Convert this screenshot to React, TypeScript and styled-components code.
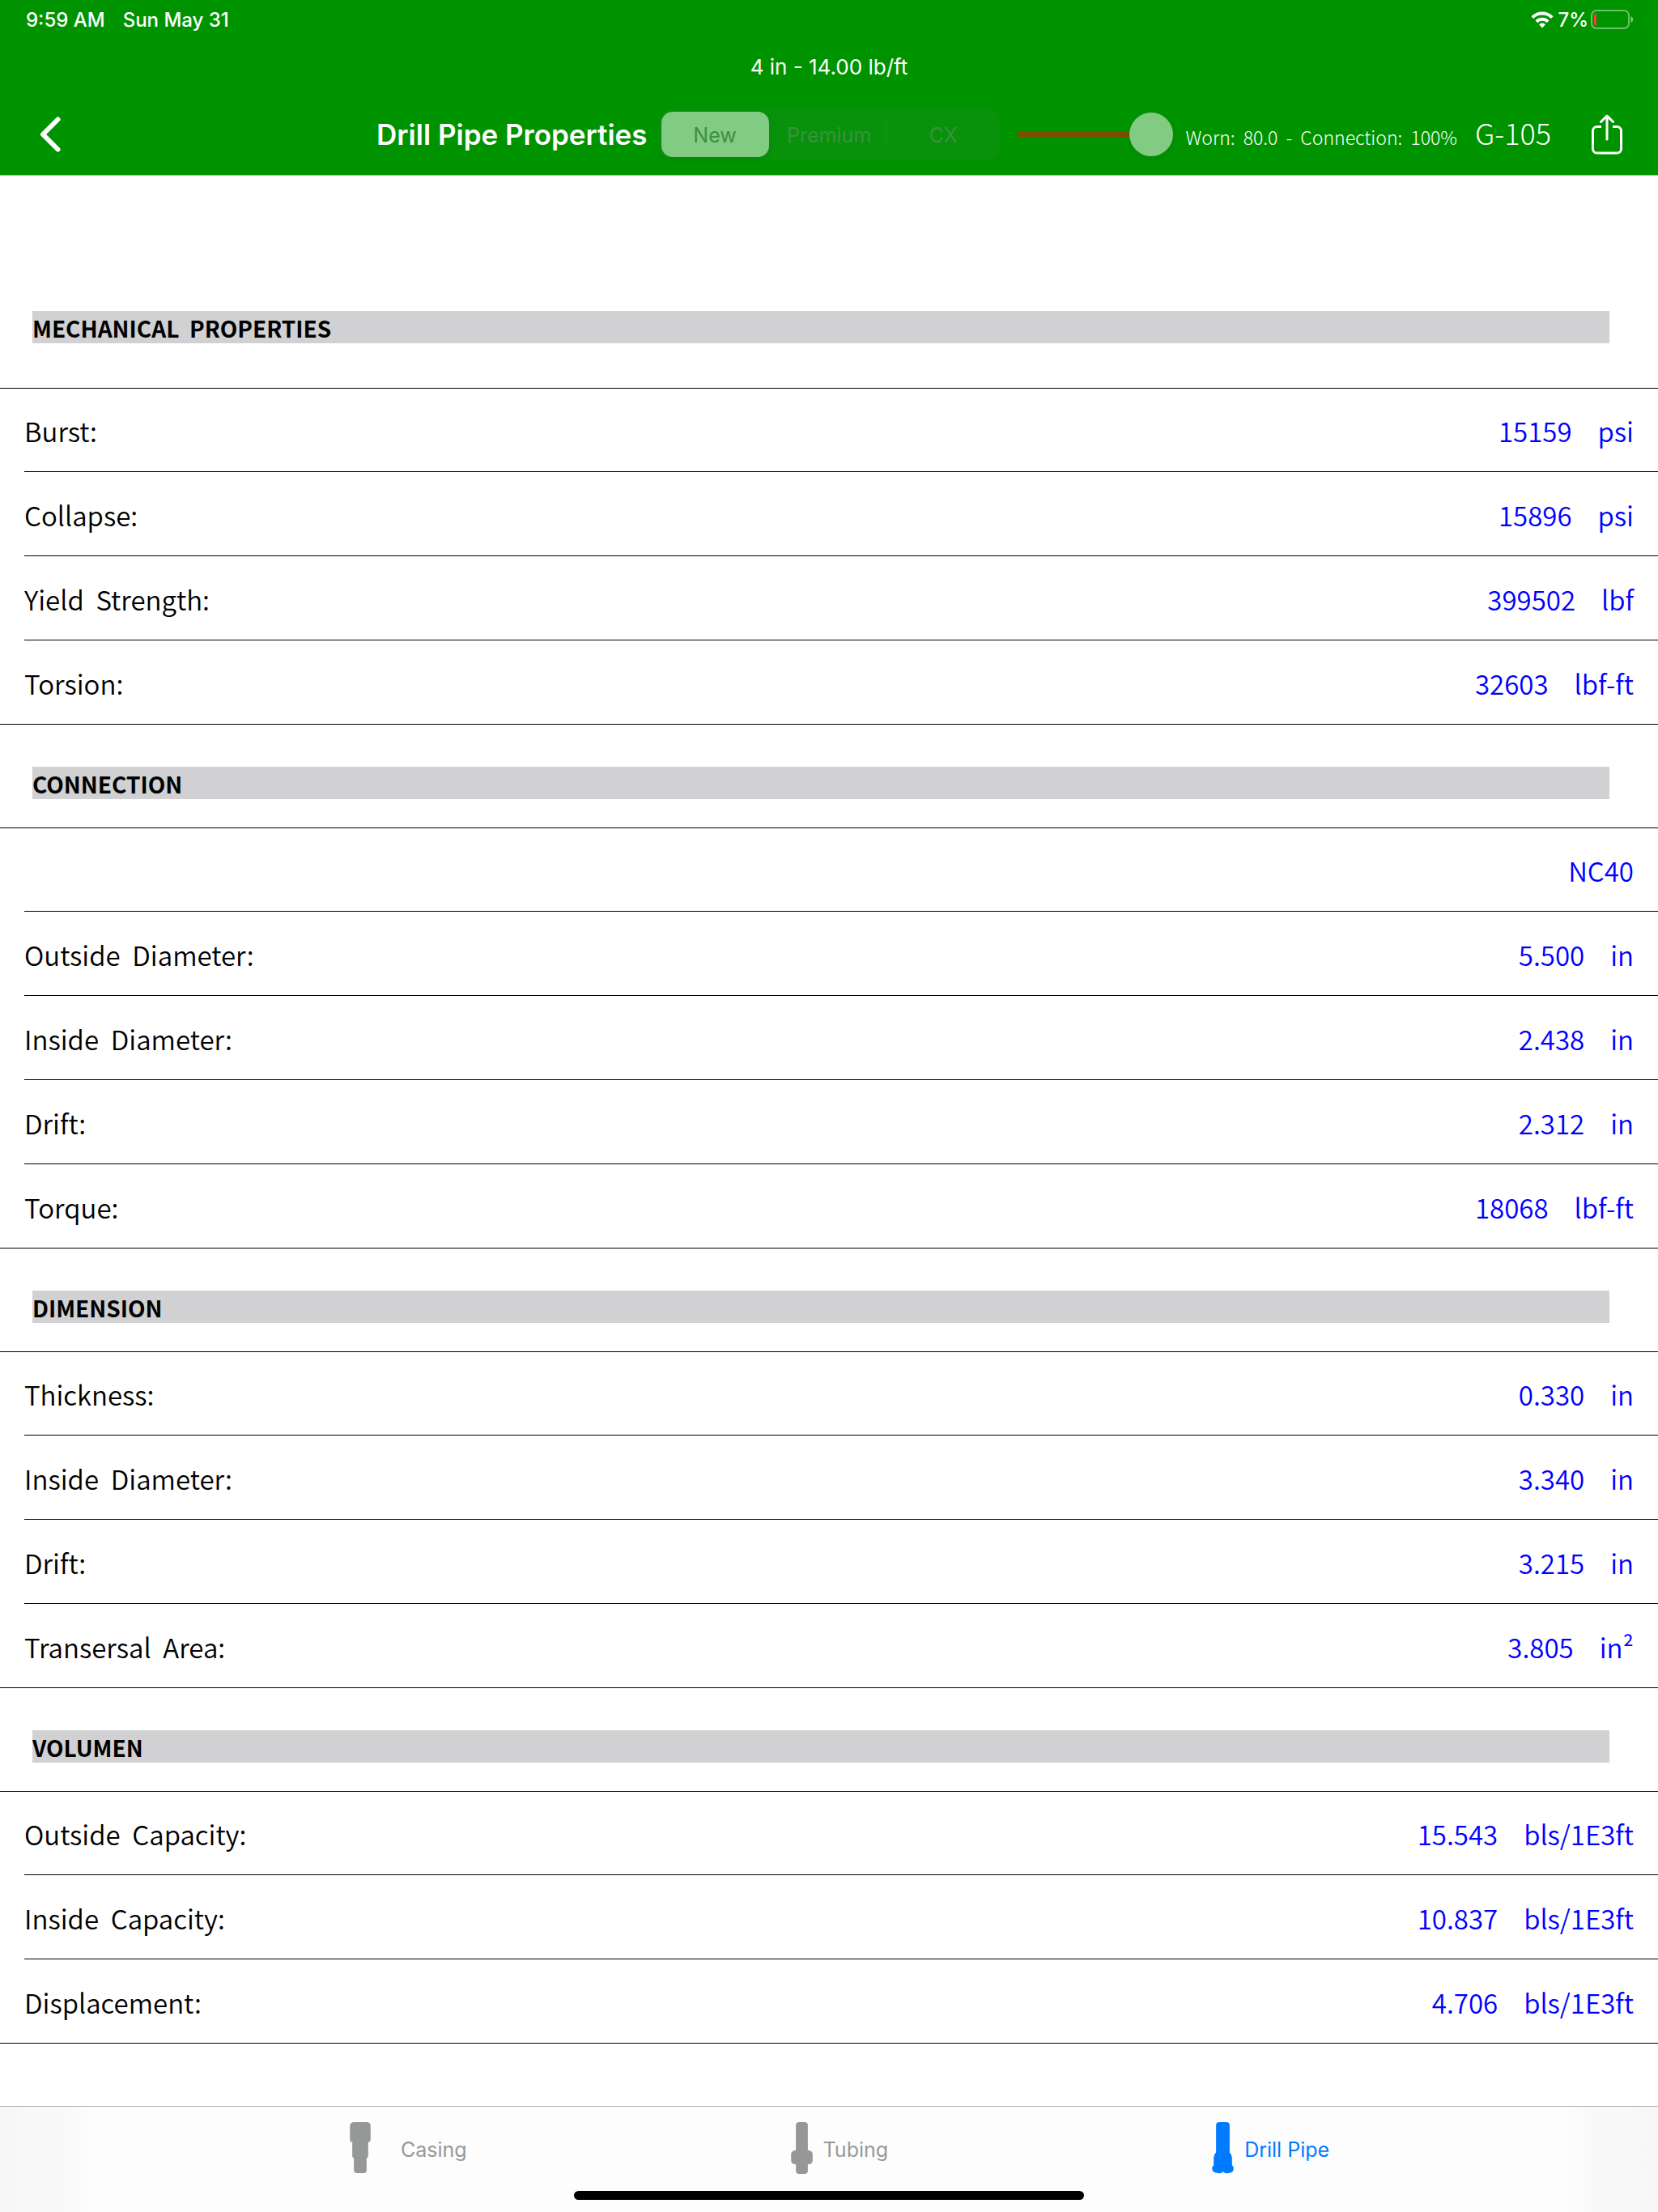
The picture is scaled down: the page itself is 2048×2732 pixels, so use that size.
import React, { useState } from "react";
import styled, { createGlobalStyle } from "styled-components";

const UI_FONT = `Inter, "Liberation Sans", sans-serif`;
const TEXT_FONT = `"Noto Sans CJK SC", "Noto Sans", sans-serif`;

const GlobalStyle = createGlobalStyle`
  *, *::before, *::after { box-sizing: border-box; }
  body { margin: 0; background: #fff; }
  button { font: inherit; color: inherit; background: none; border: 0; padding: 0; cursor: pointer; }
`;

const Page = styled.div`
  display: flex;
  flex-direction: column;
  min-height: 100vh;
  background: #fff;
  color: #000;
  font-family: ${UI_FONT};
`;

const Header = styled.header`
  background: #009300;
  color: #fff;
  border-bottom: 1px solid #b2b2b2;
`;

const StatusBar = styled.div`
  display: flex;
  align-items: center;
  justify-content: space-between;
  height: 48px;
  padding: 0 30px 0 32px;
  font-size: 24px;
  font-weight: 500;
`;

const StatusGroup = styled.div<{ $gap: number }>`
  display: flex;
  align-items: center;
  gap: ${(p) => p.$gap}px;
`;

const Prompt = styled.p`
  display: flex;
  align-items: center;
  justify-content: center;
  height: 68px;
  margin: 0;
  font-size: 26px;
`;

const NavBar = styled.nav`
  display: flex;
  align-items: center;
  justify-content: space-between;
  height: 100px;
  padding: 0 44px 0 48px;
`;

const IconButton = styled.button`
  display: flex;
`;

const NavTools = styled.div`
  display: flex;
  align-items: center;
`;

const Title = styled.h1`
  margin: 0 13px 0 0;
  font-size: 35px;
  font-weight: 600;
  line-height: 40px;
  white-space: nowrap;
`;

const Segmented = styled.fieldset`
  display: grid;
  grid-template-columns: repeat(3, 141px);
  height: 64px;
  margin: 0 21px 0 0;
  padding: 4px 0;
  border: 0;
  border-radius: 18px;
  background: #08920c;
`;

const Segment = styled.label<{ $divided?: boolean }>`
  display: flex;
  align-items: center;
  height: 56px;
  padding: 0 4px;
  color: #3c913e;
  font-size: 25px;
  background: ${(p) =>
    p.$divided ? "linear-gradient(#1a911d, #1a911d) right center / 1px 36px no-repeat" : "none"};

  input {
    position: absolute;
    opacity: 0;
    pointer-events: none;
  }

  span {
    flex: 1;
    padding-top: 2px;
    line-height: 54px;
    text-align: center;
    border-radius: 14px;
  }

  input:checked + span {
    background: #82cb82;
    box-shadow: 0 4px 8px rgba(0, 0, 0, 0.08);
  }
`;

const Slider = styled.input`
  appearance: none;
  width: 192px;
  height: 54px;
  margin: 0 16px 0 0;
  background: linear-gradient(#804a00, #804a00) center / 100% 6px no-repeat;

  &::-webkit-slider-thumb {
    appearance: none;
    width: 54px;
    height: 54px;
    border-radius: 50%;
    background: #82cb82;
    box-shadow: 0 6px 14px rgba(0, 0, 0, 0.06);
  }
`;

const Readout = styled.div`
  display: flex;
  align-items: baseline;
  gap: 22px;
  margin-right: 50px;
  padding-bottom: 7px;
  font-family: ${TEXT_FONT};
  font-weight: 300;
`;

const WornNote = styled.output`
  font-size: 23px;
  line-height: 36px;
  white-space: pre;
`;

const GradeButton = styled.button`
  && {
    font-size: 36px;
    line-height: 48px;
  }
`;

const Content = styled.main`
  flex: 1;
  padding-top: 115px;
  font-family: ${TEXT_FONT};
`;

const SectionTitle = styled.h2<{ $first: boolean }>`
  margin: 52px 60px ${(p) => (p.$first ? 55 : 35)}px 40px;
  height: 40px;
  background: #d1d1d3;
  font-size: 28px;
  font-weight: 700;
  line-height: 42px;
  white-space: pre;
`;

const List = styled.dl`
  margin: 0;
  border-top: 1px solid #000;
`;

const Row = styled.div`
  display: flex;
  align-items: center;
  justify-content: space-between;
  height: 104px;
  margin-left: 30px;
  padding: 2px 30px 0 0;
  border-bottom: 1px solid #000;
  font-size: 33px;
  font-weight: 350;
  white-space: pre;

  &:first-child {
    height: 103px;
  }

  &:last-child {
    margin-left: 0;
    padding-left: 30px;
  }
`;

const Label = styled.dt`
  line-height: 50px;
`;

const Value = styled.dd`
  display: flex;
  gap: 32px;
  margin: 0 0 0 auto;
  color: #0000ff;
  line-height: 50px;
`;

const Footer = styled.footer`
  height: 131px;
  border-top: 1px solid #b2b2b2;
  background: linear-gradient(90deg, #f7f7f7 0, #f9f9f9 80px, #fdfdfd 116px, #fdfdfd calc(100% - 116px), #f9f9f9 calc(100% - 80px), #f7f7f7 100%);
`;

const Tabs = styled.nav`
  display: flex;
  justify-content: center;
  gap: 400px;
  height: 102px;
`;

const Tab = styled.button<{ $active: boolean }>`
  && {
    display: flex;
    align-items: center;
    gap: 13px;
    color: ${(p) => (p.$active ? "#007aff" : "#969898")};
    font-family: ${UI_FONT};
    font-size: 25px;
    line-height: 32px;
  }

  span {
    padding-top: 4px;
  }
`;

const TabIcon = styled.svg`
  height: 64px;
`;

const HomeIndicator = styled.div`
  width: 630px;
  height: 11px;
  margin: 2px auto 0;
  border-radius: 6px;
  background: #000;
`;

type Item = { label?: string; value: string; unit?: string };

const sections: { title: string; items: Item[] }[] = [
  {
    title: "MECHANICAL  PROPERTIES",
    items: [
      { label: "Burst:", value: "15159", unit: "psi" },
      { label: "Collapse:", value: "15896", unit: "psi" },
      { label: "Yield  Strength:", value: "399502", unit: "lbf" },
      { label: "Torsion:", value: "32603", unit: "lbf-ft" },
    ],
  },
  {
    title: "CONNECTION",
    items: [
      { value: "NC40" },
      { label: "Outside  Diameter:", value: "5.500", unit: "in" },
      { label: "Inside  Diameter:", value: "2.438", unit: "in" },
      { label: "Drift:", value: "2.312", unit: "in" },
      { label: "Torque:", value: "18068", unit: "lbf-ft" },
    ],
  },
  {
    title: "DIMENSION",
    items: [
      { label: "Thickness:", value: "0.330", unit: "in" },
      { label: "Inside  Diameter:", value: "3.340", unit: "in" },
      { label: "Drift:", value: "3.215", unit: "in" },
      { label: "Transersal  Area:", value: "3.805", unit: "in²" },
    ],
  },
  {
    title: "VOLUMEN",
    items: [
      { label: "Outside  Capacity:", value: "15.543", unit: "bls/1E3ft" },
      { label: "Inside  Capacity:", value: "10.837", unit: "bls/1E3ft" },
      { label: "Displacement:", value: "4.706", unit: "bls/1E3ft" },
    ],
  },
];

const conditions = ["New", "Premium", "CX"];

const tabs = [
  {
    name: "Casing",
    width: 76,
    path: "M32 0h15q5 0 5 5v16q0 4-3 4v17q0 3-2 3v15q0 4-4 4h-8q-4 0-4-4v-15q-2 0-2-3v-17q-3 0-3-4v-16q0-5 6-5z",
  },
  {
    name: "Tubing",
    width: 27,
    path: "M10 0h7q4 0 4 4v31q6 1 6 5v8q0 5-6 5v8q0 4-4 4h-7q-4 0-4-4v-8q-6 0-6-5v-8q0-4 6-5v-31q0-4 4-4z",
  },
  {
    name: "Drill Pipe",
    width: 27,
    path: "M9 0h9q4 0 4 4v34q3 3 3 8v8q2 1 2 4 0 6-7 6-4 1-6-2-3 3-6 2-8 0-8-6 0-3 2-4v-8q0-5 3-8v-34q0-4 4-4z",
  },
];

const WifiIcon = () => (
  <svg width="30" height="21" viewBox="0 0 30 21" fill="none" stroke="#fff" strokeWidth="4" aria-hidden="true">
    <path d="M1.8 7.6a17.4 17.4 0 0 1 24.4 0" />
    <path d="M6.9 12.7a10.2 10.2 0 0 1 14.2 0" />
    <path d="M14 20.5l-4-4.2a5.6 5.6 0 0 1 8 0z" fill="#fff" stroke="none" />
  </svg>
);

const BatteryIcon = () => (
  <svg width="53" height="24" viewBox="0 0 53 24" aria-hidden="true">
    <rect x="1" y="1" width="46" height="22" rx="6" fill="none" stroke="#6cc06c" strokeWidth="2" />
    <path d="M49.500 8c3.600 1.500 3.600 6.500 0 8z" fill="#7fc97f" />
    <rect x="4" y="5" width="3" height="14" rx="1.500" fill="#ff3b30" />
  </svg>
);

const BackIcon = () => (
  <svg width="28" height="46" viewBox="0 0 28 46" fill="none" stroke="#fff" strokeWidth="6" strokeLinecap="round" strokeLinejoin="round" aria-hidden="true">
    <path d="M23.500 4.500L5 23l18.500 18.500" />
  </svg>
);

const ShareIcon = () => (
  <svg width="38" height="50" viewBox="0 0 38 50" fill="none" stroke="#fff" strokeWidth="3" strokeLinecap="round" strokeLinejoin="round" aria-hidden="true">
    <path d="M12 15.500H6.500a5 5 0 0 0-5 5V43a5 5 0 0 0 5 5h25a5 5 0 0 0 5-5V20.500a5 5 0 0 0-5-5H26" strokeLinecap="butt" />
    <path d="M19 31V2M11.500 9.500L19 2l7.500 7.500" />
  </svg>
);

export default function App() {
  const [condition, setCondition] = useState("New");
  const [activeTab, setActiveTab] = useState("Drill Pipe");

  return (
    <Page>
      <GlobalStyle />
      <Header>
        <StatusBar>
          <StatusGroup $gap={22}>
            <span>9:59 AM</span>
            <span>Sun May 31</span>
          </StatusGroup>
          <StatusGroup $gap={3}>
            <WifiIcon />
            <span>7%</span>
            <BatteryIcon />
          </StatusGroup>
        </StatusBar>
        <Prompt>4 in - 14.00 lb/ft</Prompt>
        <NavBar>
          <IconButton type="button" aria-label="Back">
            <BackIcon />
          </IconButton>
          <NavTools>
            <Title>Drill Pipe Properties</Title>
            <Segmented aria-label="Pipe condition">
              {conditions.map((name, i) => (
                <Segment key={name} $divided={i === 1}>
                  <input
                    type="radio"
                    name="condition"
                    checked={condition === name}
                    onChange={() => setCondition(name)}
                  />
                  <span>{name}</span>
                </Segment>
              ))}
            </Segmented>
            <Slider type="range" min={0} max={100} defaultValue={100} aria-label="Worn" />
            <Readout>
              <WornNote>{"Worn:  80.0  -  Connection:  100%"}</WornNote>
              <GradeButton type="button">G-105</GradeButton>
            </Readout>
            <IconButton type="button" aria-label="Share">
              <ShareIcon />
            </IconButton>
          </NavTools>
        </NavBar>
      </Header>
      <Content>
        {sections.map((section, i) => (
          <section key={section.title}>
            <SectionTitle $first={i === 0}>{section.title}</SectionTitle>
            <List>
              {section.items.map((item, n) => (
                <Row key={n}>
                  {item.label && <Label>{item.label}</Label>}
                  <Value>
                    <span>{item.value}</span>
                    {item.unit && <span>{item.unit}</span>}
                  </Value>
                </Row>
              ))}
            </List>
          </section>
        ))}
      </Content>
      <Footer>
        <Tabs>
          {tabs.map((tab) => (
            <Tab
              key={tab.name}
              type="button"
              $active={activeTab === tab.name}
              onClick={() => setActiveTab(tab.name)}
            >
              <TabIcon width={tab.width} viewBox={`0 0 ${tab.width} 65`} fill="currentColor" aria-hidden="true">
                <path d={tab.path} />
              </TabIcon>
              <span>{tab.name}</span>
            </Tab>
          ))}
        </Tabs>
        <HomeIndicator />
      </Footer>
    </Page>
  );
}
